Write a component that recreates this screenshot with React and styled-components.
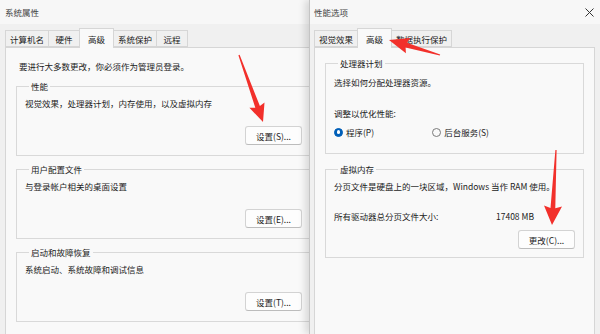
import React from "react";
import styled, { createGlobalStyle } from "styled-components";

const Global = createGlobalStyle`
  *, *::before, *::after {
    box-sizing: border-box;
  }
  body {
    margin: 0;
    background: #f0f0f0;
    font-family: "Noto Sans CJK SC", "Noto Sans", sans-serif;
    font-size: 8.5px;
    color: #1b1b1b;
  }
`;

const Screen = styled.div`
  position: relative;
  display: flex;
  width: 600px;
  height: 334px;
  overflow: hidden;
  background: #f0f0f0;
`;

const Window = styled.div`
  flex: none;
  width: ${(p) => p.$width}px;
  height: 100%;
  display: flex;
  flex-direction: column;
  background: #f0f0f0;
  overflow: hidden;
  ${(p) =>
    p.$front &&
    `
    position: relative;
    z-index: 1;
    border-left: 1px solid #c4c4c4;
    box-shadow: -4px 0 7px rgba(0, 0, 0, 0.13);
  `}
`;

const TitleBar = styled.div`
  flex: none;
  height: 24px;
  display: flex;
  align-items: center;
  justify-content: space-between;
  padding: 0 6px 0 ${(p) => p.$left}px;
  background: #f7f7f7;
  color: #444;
  line-height: 12px;
`;

const Close = styled.svg`
  width: 9px;
  height: 9px;
`;

const Body = styled.div`
  flex: 1;
  display: flex;
  flex-direction: column;
  width: ${(p) => p.$width}px;
  flex-shrink: 0;
  padding: 4px 0 0 ${(p) => p.$left}px;
`;

const TabStrip = styled.div`
  flex: none;
  display: flex;
  align-items: flex-end;
  height: 19px;
`;

const Tab = styled.div`
  height: ${(p) => (p.$active ? 20 : 17)}px;
  min-width: 32px;
  padding: 0 ${(p) => (p.$active ? 8 : 4)}px;
  margin-right: -1px;
  margin-bottom: ${(p) => (p.$active ? -1 : 0)}px;
  display: flex;
  align-items: center;
  justify-content: center;
  border: 1px solid #d6d6d6;
  border-bottom: ${(p) => (p.$active ? "none" : "1px solid #d6d6d6")};
  background: ${(p) => (p.$active ? "#f9f9f9" : "#f0f0f0")};
  position: relative;
  z-index: ${(p) => (p.$active ? 1 : 0)};
  line-height: 12px;
  white-space: nowrap;
`;

const Panel = styled.div`
  flex: 1;
  min-height: 300px;
  margin-right: ${(p) => p.$right}px;
  padding: ${(p) => p.$top}px 10px 0;
  background: #f9f9f9;
  border: 1px solid #d6d6d6;
  line-height: 12px;
`;

const Intro = styled.div`
  margin: 0 0 8px 3px;
`;

const Group = styled.fieldset`
  margin: 0 0 ${(p) => p.$gap}px;
  padding: ${(p) => p.$pt}px ${(p) => p.$pr}px ${(p) => p.$pb}px 8px;
  border: 1px solid #d9d9d9;
  min-inline-size: 0;
  display: flex;
  flex-direction: column;
`;

const Legend = styled.legend`
  margin-left: 4px;
  padding: 0 2px;
  line-height: 12px;
  color: #1b1b1b;
`;

const Line = styled.div`
  margin-top: ${(p) => p.$mt || 0}px;
  white-space: nowrap;
`;

const Button = styled.div`
  align-self: flex-end;
  margin-top: ${(p) => p.$mt}px;
  width: 57px;
  height: 19px;
  display: flex;
  align-items: center;
  justify-content: center;
  background: #fdfdfd;
  border: 1px solid #d3d3d3;
  border-bottom-color: #bcbcbc;
  border-radius: 3px;
  white-space: nowrap;
`;

const RadioRow = styled.div`
  display: flex;
  gap: 58px;
  margin-top: 7px;
`;

const RadioOption = styled.div`
  display: flex;
  align-items: center;
  gap: 3px;
  white-space: nowrap;
`;

const RadioDot = styled.span`
  width: 9px;
  height: 9px;
  border-radius: 50%;
  display: flex;
  align-items: center;
  justify-content: center;
  background: ${(p) => (p.$on ? "#005fb8" : "#f9f9f9")};
  border: 1px solid ${(p) => (p.$on ? "#005fb8" : "#7a7a7a")};
  &::after {
    content: "";
    display: ${(p) => (p.$on ? "block" : "none")};
    width: 3.5px;
    height: 3.5px;
    border-radius: 50%;
    background: #fff;
  }
`;

const SizeRow = styled.div`
  display: grid;
  grid-template-columns: 162px auto;
  margin-top: 18px;
  white-space: nowrap;
`;

const Overlay = styled.svg`
  position: absolute;
  inset: 0;
  width: 600px;
  height: 334px;
  pointer-events: none;
  z-index: 5;
`;

const Arrow = ({ from, to, head = 19, spread = 8, shaft = 2.4 }) => {
  const dx = to[0] - from[0];
  const dy = to[1] - from[1];
  const len = Math.hypot(dx, dy);
  const ux = dx / len;
  const uy = dy / len;
  const px = -uy;
  const py = ux;
  const bx = to[0] - ux * head;
  const by = to[1] - uy * head;
  const pts = [
    [from[0] + px * 0.6, from[1] + py * 0.6],
    [bx + ux * 2 + px * shaft, by + uy * 2 + py * shaft],
    [bx + px * spread, by + py * spread],
    to,
    [bx - px * spread, by - py * spread],
    [bx + ux * 2 - px * shaft, by + uy * 2 - py * shaft],
    [from[0] - px * 0.6, from[1] - py * 0.6],
  ];
  return (
    <polygon
      points={pts.map((p) => p.map((v) => v.toFixed(1)).join(",")).join(" ")}
      fill="#f2302b"
    />
  );
};

const leftTabs = ["计算机名", "硬件", "高级", "系统保护", "远程"];
const rightTabs = ["视觉效果", "高级", "数据执行保护"];

const leftGroups = [
  { title: "性能", text: "视觉效果，处理器计划，内存使用，以及虚拟内存", button: "设置(S)..." },
  { title: "用户配置文件", text: "与登录帐户相关的桌面设置", button: "设置(E)..." },
  { title: "启动和故障恢复", text: "系统启动、系统故障和调试信息", button: "设置(T)..." },
];

const App = () => {
  return (
    <>
      <Global />
      <Screen>
        <Window $width={309}>
          <TitleBar $left={5}>系统属性</TitleBar>
          <Body $width={340} $left={5}>
            <TabStrip>
              {leftTabs.map((t) => (
                <Tab key={t} $active={t === "高级"}>
                  {t}
                </Tab>
              ))}
            </TabStrip>
            <Panel $top={12} $right={5}>
              <Intro>要进行大多数更改，你必须作为管理员登录。</Intro>
              {leftGroups.map((g) => (
                <Group key={g.title} $gap={7} $pt={5} $pr={21} $pb={10}>
                  <Legend>{g.title}</Legend>
                  <Line>{g.text}</Line>
                  <Button $mt={17}>{g.button}</Button>
                </Group>
              ))}
            </Panel>
          </Body>
        </Window>

        <Window $width={291} $front>
          <TitleBar $left={4}>
            性能选项
            <Close viewBox="0 0 9 9">
              <path d="M0.5 0.5 L8.5 8.5 M8.5 0.5 L0.5 8.5" stroke="#333" strokeWidth="1" />
            </Close>
          </TitleBar>
          <Body $width={290} $left={4}>
            <TabStrip>
              {rightTabs.map((t) => (
                <Tab key={t} $active={t === "高级"}>
                  {t}
                </Tab>
              ))}
            </TabStrip>
            <Panel $top={9} $right={5}>
              <Group $gap={9} $pt={7} $pr={8} $pb={15}>
                <Legend>处理器计划</Legend>
                <Line>选择如何分配处理器资源。</Line>
                <Line $mt={19}>调整以优化性能:</Line>
                <RadioRow>
                  <RadioOption>
                    <RadioDot $on />
                    程序(P)
                  </RadioOption>
                  <RadioOption>
                    <RadioDot />
                    后台服务(S)
                  </RadioOption>
                </RadioRow>
              </Group>
              <Group $gap={0} $pt={5} $pr={8} $pb={8}>
                <Legend>虚拟内存</Legend>
                <Line>分页文件是硬盘上的一块区域，Windows 当作 RAM 使用。</Line>
                <SizeRow>
                  <span>所有驱动器总分页文件大小:</span>
                  <span>17408 MB</span>
                </SizeRow>
                <Button $mt={8}>更改(C)...</Button>
              </Group>
            </Panel>
          </Body>
        </Window>

        <Overlay viewBox="0 0 600 334">
          <Arrow from={[239, 55]} to={[263, 122]} head={18} spread={8} />
          <Arrow from={[440, 55]} to={[389, 40]} head={20} spread={8} />
          <Arrow from={[556, 150]} to={[552, 225]} head={19} spread={9} />
        </Overlay>
      </Screen>
    </>
  );
};

export default App;
